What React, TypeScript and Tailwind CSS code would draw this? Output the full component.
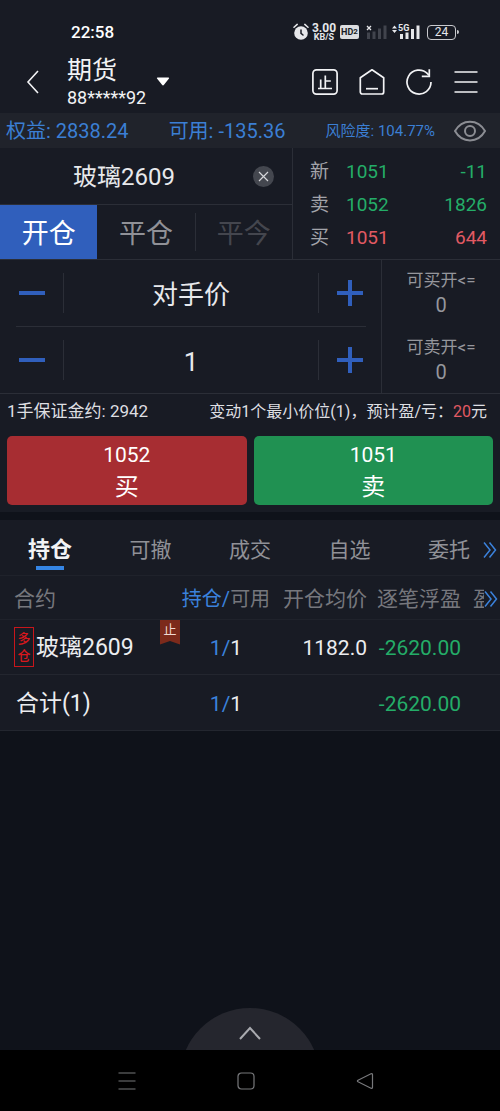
import { useState, type ReactNode } from "react";

const quotes = [
  { label: "新", price: "1051", volume: "-11", color: "text-[#24ad68]" },
  { label: "卖", price: "1052", volume: "1826", color: "text-[#24ad68]" },
  { label: "买", price: "1051", volume: "644", color: "text-[#e25a63]" },
];

const tabs = ["持仓", "可撤", "成交", "自选", "委托"];

function StatusBar() {
  return (
    <div className="flex h-[50px] items-center justify-between pt-[14px] pr-[41px] pl-[71px] text-[#e6e7ea]">
      <span className="text-[17px] leading-5 font-medium text-white">22:58</span>
      <div className="flex items-center">
        {/* alarm */}
        <svg width="16" height="18" viewBox="0 0 16 18" className="mr-[3px]">
          <circle cx="8" cy="10" r="6.8" fill="#e6e7ea" />
          <path d="M1 4.2 4.2 1.4M15 4.2 11.8 1.4" stroke="#e6e7ea" strokeWidth="1.5" strokeLinecap="round" />
          <path d="M8 7v3.4l2 1.6" fill="none" stroke="#181b24" strokeWidth="1.5" strokeLinecap="round" />
        </svg>
        <div className="mr-1 flex w-6 flex-col items-center font-bold">
          <span className="text-[12px] leading-[10px]">3.00</span>
          <span className="text-[9px] leading-[9px]">KB/S</span>
        </div>
        <span className="mr-[7px] flex h-[14px] w-[19px] items-center justify-center rounded-[2px] bg-[#dcdde0] text-[9px] leading-3 font-bold text-[#181b24]">
          HD<small className="text-[8px] leading-3">2</small>
        </span>
        {/* sim 1, no signal */}
        <svg width="21" height="16" viewBox="0 0 21 16" className="mr-[5px]">
          <path d="M1 2l4 4M5 2 1 6" stroke="#e6e7ea" strokeWidth="1.3" />
          <path d="M2.500 8.500V15M8 7.500V15M13.500 4.500V15M19 1.500V15" stroke="#41444d" strokeWidth="3" />
        </svg>
        {/* sim 2 */}
        <div className="relative mr-[7px] h-4 w-7">
          <svg width="28" height="16" viewBox="0 0 28 16">
            <path d="M0 4.500 2.500 1.500 5 4.500zM0 6 2.500 9 5 6z" fill="#e6e7ea" />
            <path d="M9.500 10v5M15 8.500V15M20.500 5v10M26 1.500V15" stroke="#e6e7ea" strokeWidth="3" />
          </svg>
          <span className="absolute top-0 left-[6px] bg-[#181b24] text-[9px] leading-[8px] font-bold">5G</span>
        </div>
        <div className="flex items-center">
          <span className="flex h-[15px] w-[29px] items-center justify-center rounded-[4px] border border-[#c9cace] text-[12px] leading-3">
            24
          </span>
          <span className="ml-px h-1 w-0.5 rounded-r-sm bg-[#c9cace]" />
        </div>
      </div>
    </div>
  );
}

function Header() {
  return (
    <header className="flex h-[63px] items-center justify-between pr-5 pl-[21px] text-[#f2f3f5]">
      <div className="flex items-center">
        <button type="button" aria-label="返回" className="mr-6">
          <svg width="22" height="26" viewBox="0 0 22 26" fill="none" stroke="currentColor" strokeWidth="1.6">
            <path d="M17 2 7 13l10 11" />
          </svg>
        </button>
        <button type="button" aria-label="切换账户" className="flex items-center gap-[10px] text-left">
          <span className="flex flex-col pt-[2px]">
            <span className="text-[25px] leading-[30px]">期货</span>
            <span className="text-[18px] leading-6">88*****92</span>
          </span>
          <svg width="14" height="10" viewBox="0 0 14 10">
            <path d="M1.500.5h11q1.200.2.3 1.300L8 7.800Q7 9 6 7.800L1.200 1.800Q.3.7 1.500.5z" fill="#fff" />
          </svg>
        </button>
      </div>
      <div className="flex items-center gap-[19px]">
        <button type="button" aria-label="止损">
          <svg width="28" height="28" viewBox="0 0 28 28" fill="none" stroke="currentColor" strokeWidth="1.7">
            <rect x="1.900" y="1.900" width="24.200" height="24.200" rx="3.500" />
            <path d="M7 20.500h14M14.300 7.500v13M14.300 13h5.500M9.700 11.500v9" />
          </svg>
        </button>
        <button type="button" aria-label="首页">
          <svg width="28" height="28" viewBox="0 0 28 28" fill="none" stroke="currentColor" strokeWidth="1.7" strokeLinejoin="round">
            <path d="M14 1.800 25.700 9.700V24a2 2 0 0 1-2 2H4.300a2 2 0 0 1-2-2V9.700z" />
            <path d="M8 20.700h12" />
          </svg>
        </button>
        <button type="button" aria-label="刷新">
          <svg width="28" height="28" viewBox="0 0 28 28" fill="none" stroke="currentColor" strokeWidth="1.700">
            <path d="M26 14A12 12 0 1 1 22.500 5.600L24 7.300" />
            <path d="M24.300 1.200v7.200h-7.500" />
          </svg>
        </button>
        <button type="button" aria-label="菜单">
          <svg width="28" height="28" viewBox="0 0 28 28" fill="none" stroke="currentColor" strokeWidth="1.700">
            <path d="M2.500 4h23M2.500 14h23M2.500 24h23" />
          </svg>
        </button>
      </div>
    </header>
  );
}

function AccountBar() {
  return (
    <div className="flex h-[35px] items-center justify-between bg-[#20232b] pt-px pr-[13px] pl-[6px] text-[20px] leading-7 text-[#3b7fd4]">
      <span>权益: 2838.24</span>
      <span>可用: -135.36</span>
      <div className="flex items-center gap-[18px]">
        <span className="text-[15px]">风险度: 104.77%</span>
        <button type="button" aria-label="隐藏金额">
          <svg width="34" height="24" viewBox="0 0 34 24" fill="none" stroke="#8b8d93" strokeWidth="2">
            <path d="M2 12C9-.5 25-.5 32 12 25 24.500 9 24.500 2 12z" />
            <circle cx="17" cy="12" r="5" />
          </svg>
        </button>
      </div>
    </div>
  );
}

function QuotePanel() {
  return (
    <section className="flex h-28 border-b border-[#2b2e37]">
      <div className="flex min-w-0 flex-1 flex-col border-r border-[#2b2e37]">
        <div className="flex h-[57px] shrink-0 items-center border-b border-[#2b2e37] pr-[18px]">
          <input
            aria-label="合约"
            defaultValue="玻璃2609"
            className="min-w-0 flex-1 bg-transparent pt-[2px] pr-[5px] text-center text-[24px] leading-8 text-[#e8e9ec] outline-none"
          />
          <button type="button" aria-label="清除" className="rounded-full bg-[#44474f]">
            <svg width="21" height="21" viewBox="0 0 21 21" stroke="#d5d6da" strokeWidth="1.200">
              <path d="M6 6l9 9M15 6l-9 9" />
            </svg>
          </button>
        </div>
        <div className="grid flex-1 grid-cols-3 text-[27px] leading-8">
          <button type="button" className="bg-[#305fbc] pt-1 text-white">开仓</button>
          <button type="button" className="pt-1 text-[#909197]">平仓</button>
          <button type="button" className="my-2 border-l border-[#2b2e37] pt-1 text-[#44464e]">平今</button>
        </div>
      </div>
      <dl className="flex w-[207px] flex-col justify-center pt-px pr-[13px] pl-[17px] text-[19px] leading-[33px]">
        {quotes.map((q) => (
          <div key={q.label} className="flex">
            <dt className="w-9 text-[#a3a4aa]">{q.label}</dt>
            <dd className={`flex flex-1 justify-between ${q.color}`}>
              <span>{q.price}</span>
              <span>{q.volume}</span>
            </dd>
          </div>
        ))}
      </dl>
    </section>
  );
}

function Stepper({ label, value }: { label: string; value: string }) {
  return (
    <div className="flex h-[66px] items-center">
      <button type="button" aria-label={`${label}减`} className="flex h-10 w-12 items-center border-r border-[#2b2e37] pl-[3px]">
        <svg width="26" height="26" viewBox="0 0 26 26" stroke="#305fbc" strokeWidth="4">
          <path d="M0 13h26" />
        </svg>
      </button>
      <input
        aria-label={label}
        defaultValue={value}
        className="min-w-0 flex-1 bg-transparent pt-1 text-center text-[26px] leading-9 text-[#e8e9ec] outline-none"
      />
      <button type="button" aria-label={`${label}加`} className="flex h-10 w-12 items-center justify-end border-l border-[#2b2e37] pr-[3px]">
        <svg width="26" height="26" viewBox="0 0 26 26" stroke="#305fbc" strokeWidth="4">
          <path d="M0 13h26M13 0v26" />
        </svg>
      </button>
    </div>
  );
}

function OrderPanel() {
  return (
    <section className="flex border-b border-[#2b2e37]">
      <div className="min-w-0 flex-1 border-r border-[#2b2e37] pr-[15px] pl-4">
        <Stepper label="价格" value="对手价" />
        <div className="border-t border-[#2b2e37]">
          <Stepper label="手数" value="1" />
        </div>
      </div>
      <div className="flex w-[118px] flex-col justify-around text-center text-[17px] leading-[25px] text-[#95969c]">
        <p>
          可买开&lt;=
          <span className="block text-[20px]">0</span>
        </p>
        <p>
          可卖开&lt;=
          <span className="block text-[20px]">0</span>
        </p>
      </div>
    </section>
  );
}

function TradeButtons() {
  return (
    <section className="px-[7px] pb-[7px]">
      <div className="flex h-[42px] items-center justify-between pr-[6px] pb-[6px] text-[16px] text-[#dedfe2]">
        <span className="text-[17px]">1手保证金约: 2942</span>
        <span>
          变动1个最小价位(1)，预计盈/亏：<span className="text-[#e25a63]">20</span>元
        </span>
      </div>
      <div className="grid grid-cols-2 gap-[7px] text-white">
        <button type="button" className="flex h-[69px] flex-col items-center justify-center rounded-[5px] bg-[#a72d32] pt-px">
          <span className="text-[21px] leading-8">1052</span>
          <span className="text-[24px] leading-8">买</span>
        </button>
        <button type="button" className="flex h-[69px] flex-col items-center justify-center rounded-[5px] bg-[#209152] pt-px">
          <span className="text-[21px] leading-8">1051</span>
          <span className="text-[24px] leading-8">卖</span>
        </button>
      </div>
    </section>
  );
}

function DoubleChevron() {
  return (
    <svg width="14" height="18" viewBox="0 0 14 18" fill="none" stroke="#3b82dc" strokeWidth="1.500" className="shrink-0">
      <path d="M1 1.500l6 7.500-6 7.500M6.500 1.500l6 7.500-6 7.500" />
    </svg>
  );
}

function Tabs() {
  const [active, setActive] = useState("持仓");
  return (
    <nav className="flex h-14 items-center border-b border-[#1f222b]">
      <div className="flex flex-1 justify-between pr-[13px] pl-7">
        {tabs.map((tab) => (
          <button
            key={tab}
            type="button"
            onClick={() => setActive(tab)}
            className={
              tab === active
                ? "flex flex-col items-center pt-2 text-[22px] leading-8 font-bold text-[#f2f3f5]"
                : "flex flex-col items-center pt-2 text-[21px] leading-8 text-[#909197]"
            }
          >
            {tab}
            <span className={tab === active ? "h-1 w-7 bg-[#3585e4]" : "h-1 w-7"} />
          </button>
        ))}
      </div>
      <button type="button" aria-label="更多" className="mt-1 mr-[3px]">
        <DoubleChevron />
      </button>
    </nav>
  );
}

function Lots() {
  return (
    <>
      <span className="text-[#3b82dc]">1/</span>1
    </>
  );
}

function HeadCell({ children, className }: { children: ReactNode; className: string }) {
  return <th scope="col" className={`p-0 pt-[3px] font-normal whitespace-nowrap ${className}`}>{children}</th>;
}

function Positions() {
  return (
    <table className="w-full table-fixed text-[21px] leading-8 text-[#ecedf0]">
      <colgroup>
        <col />
        <col className="w-[92px]" />
        <col className="w-[95px]" />
        <col className="w-[94px]" />
        <col className="w-[39px]" />
      </colgroup>
      <thead className="text-[#76777d]">
        <tr className="h-[43px] border-b border-[#1f222b]">
          <HeadCell className="pl-[14px] text-left">合约</HeadCell>
          <HeadCell className="text-center text-[20px]">
            <span className="text-[#3b82dc]">持仓/</span>可用
          </HeadCell>
          <HeadCell className="text-right">开仓均价</HeadCell>
          <HeadCell className="text-right">逐笔浮盈</HeadCell>
          <HeadCell className="pl-3">
            <span className="flex items-center">
              <span className="w-[11px] overflow-hidden">盈</span>
              <DoubleChevron />
            </span>
          </HeadCell>
        </tr>
      </thead>
      <tbody>
        <tr className="h-[55px] border-b border-[#23262f]">
          <td className="p-0 pl-[14px]">
            <div className="flex h-[54px] items-center">
              <span className="mr-[2px] flex w-5 flex-col items-center border border-[#c8161b] py-[2px] text-[13px] leading-[17px] font-medium text-[#d8181d]">
                <span>多</span>
                <span>仓</span>
              </span>
              <span className="pt-[3px] text-[23px]">玻璃2609</span>
              <span className="ml-auto flex h-[25px] w-5 justify-center self-start bg-[#7c2a1b] text-[13px] leading-[20px] text-[#f0d9d3] [clip-path:polygon(0_0,100%_0,100%_100%,50%_86%,0_100%)]">
                止
              </span>
            </div>
          </td>
          <td className="p-0 pt-[2px] text-center"><Lots /></td>
          <td className="p-0 pt-[2px] text-right">1182.0</td>
          <td className="p-0 pt-[2px] text-right text-[#24ad68]">-2620.00</td>
          <td />
        </tr>
        <tr className="h-14 border-b border-[#23262f]">
          <td className="p-0 pt-1 pl-4 text-[23px]">合计(1)</td>
          <td className="p-0 pt-1 text-center"><Lots /></td>
          <td />
          <td className="p-0 pt-1 text-right text-[#24ad68]">-2620.00</td>
          <td />
        </tr>
      </tbody>
    </table>
  );
}

function SystemNav() {
  return (
    <nav className="grid h-[61px] grid-cols-3 place-items-center bg-black pr-[76px] pl-[68px]">
      <button type="button" aria-label="最近任务">
        <svg width="18" height="18" viewBox="0 0 18 18" stroke="#77787b" strokeWidth="1.200">
          <path d="M.5 1h17M.5 9h17M.5 17h17" />
        </svg>
      </button>
      <button type="button" aria-label="主屏幕">
        <svg width="18" height="18" viewBox="0 0 18 18" fill="none" stroke="#77787b" strokeWidth="1.200">
          <rect x="1" y="1" width="16" height="16" rx="3.500" />
        </svg>
      </button>
      <button type="button" aria-label="后退">
        <svg width="18" height="18" viewBox="0 0 18 18" fill="none" stroke="#77787b" strokeWidth="1.200" strokeLinejoin="round">
          <path d="M15 1.800 2 8.200Q.8 9 2 9.800L15 16.200Q16.500 16.600 16.500 15.200V2.800Q16.500 1.400 15 1.800z" />
        </svg>
      </button>
    </nav>
  );
}

export default function App() {
  return (
    <div className="flex min-h-screen flex-col bg-[#0f121a] font-[Roboto,'Noto_Sans_CJK_SC',sans-serif]">
      <div className="bg-[#181b24]">
        <StatusBar />
        <Header />
        <AccountBar />
        <QuotePanel />
        <OrderPanel />
        <TradeButtons />
      </div>
      <main className="mt-2 bg-[#181b24]">
        <Tabs />
        <Positions />
      </main>
      <div className="mt-auto flex h-[42px] justify-center overflow-hidden">
        <button type="button" aria-label="展开" className="flex h-[140px] w-[140px] shrink-0 justify-center rounded-full bg-[#25262e] pt-[18px]">
          <svg width="22" height="14" viewBox="0 0 22 14" fill="none" stroke="#a9aaaf" strokeWidth="2">
            <path d="M1 13 11 2l10 11" />
          </svg>
        </button>
      </div>
      <SystemNav />
    </div>
  );
}
